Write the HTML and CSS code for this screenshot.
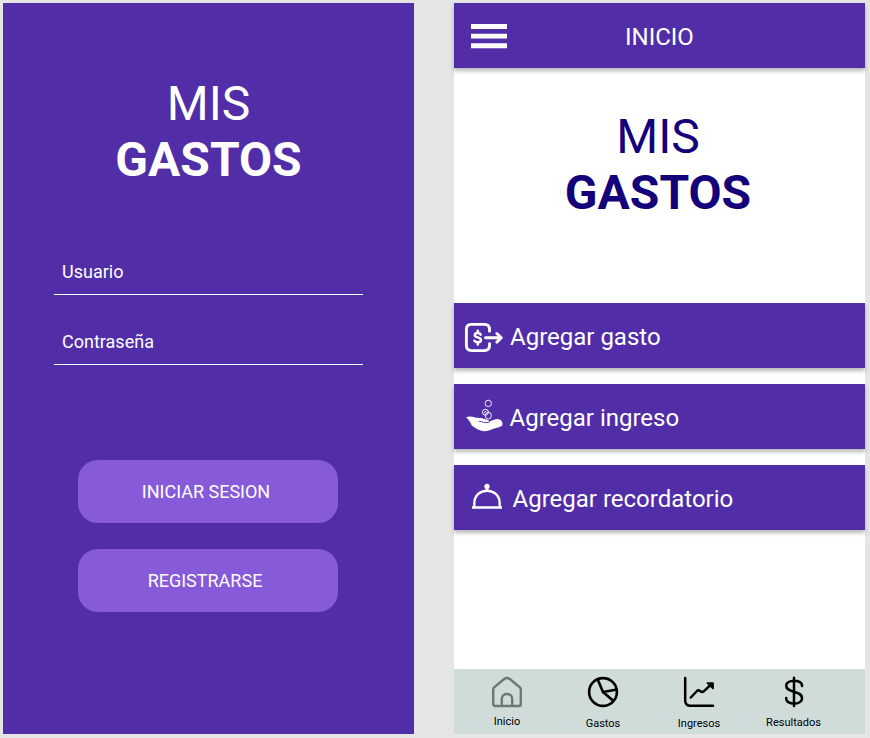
FILE: index.html
```html
<!DOCTYPE html>
<html lang="es">
<head>
<meta charset="utf-8">
<title>Mis Gastos</title>
<link rel="stylesheet" href="styles.css">
</head>
<body>
<main class="board">
  <section class="screen login">
    <h1 class="brand">MIS<br><b>GASTOS</b></h1>
    <form class="form">
      <div class="field">Usuario</div>
      <div class="field">Contraseña</div>
    </form>
    <div class="actions">
      <button class="btn" type="button">INICIAR SESION</button>
      <button class="btn btn-alt" type="button">REGISTRARSE</button>
    </div>
  </section>

  <section class="screen home">
    <header class="bar">
      <svg class="menu" width="36" height="25" viewBox="0 0 36 25" fill="#fff"><path d="M0 0h36v5H0zM0 9.7h36v4.7H0zM0 19.3h36v5H0z"/></svg>
      <span class="bar-title">INICIO</span>
    </header>
    <h1 class="brand brand-dark">MIS<br><b>GASTOS</b></h1>
    <div class="options">
      <div class="option expense">
        <svg width="40" height="32" viewBox="0 0 40 32" fill="none" stroke="#fff" stroke-width="2.9" stroke-linecap="round" stroke-linejoin="round">
          <path d="M25.5 9.2V7.4Q25.5 2.4 20.5 2.4H7.4Q2.4 2.4 2.4 7.4V23.6Q2.4 28.6 7.4 28.6H20.5Q25.5 28.6 25.5 23.6V21.6"/>
          <path d="M21.5 15.8H37M32.8 11.5L37.3 15.8L32.8 20.1"/>
          <path stroke-width="2.5" d="M16.7 12.6C15.6 10.4 10.8 10.4 10.8 13.2C10.8 16.2 17 14.6 17 18C17 21 11.6 21 10.4 18.7M13.8 8.7V10.7M13.8 20.6V22.6"/>
        </svg>
        <span>Agregar gasto</span>
      </div>
      <div class="option income">
        <svg width="38" height="34" viewBox="0 0 38 34" fill="none" stroke="#fff" stroke-width=".9">
          <circle cx="22.3" cy="5.4" r="3.2"/>
          <circle cx="19.4" cy="14.2" r="3"/>
          <ellipse cx="22.3" cy="17.6" rx="3" ry="3.5"/>
          <path d="M17.9 15.3l2.3-2.8"/>
          <path fill="#fff" stroke="none" d="M.2 19.4C2.8 17.9 5.8 18.8 9 19.6C12 20.3 15.5 20 18.7 21C21 21.6 22.8 22.5 23.2 23.7C26.2 22.8 29.7 20.7 32.5 21.2C35.8 21.5 37 24.5 36.3 27.3C34.9 29.5 30 29.7 26.8 31C23.5 32.5 19.5 34.1 15.4 32.8C11.5 31.5 7.5 29.5 5.6 27.3C4.8 24.9 3.4 22.3.2 19.4z"/>
          <path stroke="#512da8" d="M12.8 23.3C16 23.1 18.5 25.7 23.2 24.3"/>
        </svg>
        <span>Agregar ingreso</span>
      </div>
      <div class="option reminder">
        <svg width="32" height="28" viewBox="0 0 32 28" fill="none" stroke="#fff" stroke-width="2.4">
          <path d="M1 24.5H31M3.3 24V20.5C3.3 3.4 28.7 3.4 28.7 20.5V24"/>
          <path d="M16 4V8"/>
          <circle cx="16" cy="3.4" r="2.6" fill="#fff" stroke="none"/>
        </svg>
        <span>Agregar recordatorio</span>
      </div>
    </div>
    <nav class="tabs">
      <div class="tab tab-high">
        <svg width="32" height="32" viewBox="0 0 32 32" fill="none" stroke="#6d7776" stroke-width="2.4" stroke-linejoin="round"><path d="M2.2 13.8Q2.2 12.2 3.4 11.1L13.2 3Q16 .9 18.8 3L28.6 11.1Q29.8 12.2 29.8 13.8V28Q29.8 30 27.8 30H4.2Q2.2 30 2.2 28zM10.8 30V22.8C10.8 16.3 21.2 16.3 21.2 22.8V30"/></svg>
        <span>Inicio</span>
      </div>
      <div class="tab">
        <svg width="32" height="32" viewBox="0 0 32 32" fill="none" stroke="#000" stroke-width="2.6"><circle cx="16" cy="16" r="13.9"/><path d="M10.5 3L16 16L30 13.5M16 16L26.5 25"/></svg>
        <span>Gastos</span>
      </div>
      <div class="tab">
        <svg width="32" height="32" viewBox="0 0 32 32" fill="none" stroke="#000" stroke-width="2.5" stroke-linecap="round" stroke-linejoin="round"><path d="M2.2 2V24.5Q2.2 29.8 7.5 29.8H30M7.8 21.5L14 15Q15.3 13.7 16.8 14.7L18.2 15.8Q19.6 16.5 21 15.2L28 8.5"/><path d="M24.3 7H30V12.4z" fill="#000" stroke-width="1.7"/></svg>
        <span>Ingresos</span>
      </div>
      <div class="tab tab-mid">
        <svg width="32" height="32" viewBox="0 0 32 32" fill="none" stroke="#000" stroke-width="2.5" stroke-linecap="round"><path d="M16 1.8V30.1M24 10V9.5C24 3 8.2 3 8.2 9.8C8.2 17.3 24 14.2 24 22.2C24 29.4 8.2 29.4 8.2 22.4V22"/></svg>
        <span>Resultados</span>
      </div>
    </nav>
  </section>
</main>
</body>
</html>
```
FILE: styles.css
```css
* { box-sizing: border-box; }

body {
  margin: 0;
  background: #e5e5e5;
  font-family: Roboto, "Liberation Sans", sans-serif;
}

.board {
  display: flex;
  gap: 40px;
  padding: 3px;
}

.screen {
  display: flex;
  flex-direction: column;
  flex: none;
  width: 411px;
  height: 731px;
}

.login {
  background: #512da8;
  color: #fff;
  padding-top: 73px;
}

.brand {
  margin: 0;
  font-size: 48px;
  line-height: 56px;
  font-weight: 400;
  text-align: center;
}

.brand b { font-weight: 700; }

.brand-dark {
  margin-top: 41px;
  padding-right: 3px;
  color: #14007a;
}

.form {
  width: 309px;
  margin: 60px 0 0 51px;
}

.field {
  display: flex;
  flex-direction: column;
  justify-content: space-between;
  height: 70px;
  padding: 13px 8px 23px;
  font-size: 18px;
  line-height: 21px;
}

.field::after {
  content: "";
  height: 1px;
  margin: 0 -8px;
  background: #fff;
}

.actions {
  display: flex;
  flex-direction: column;
  gap: 26px;
  margin: 72px 0 0 75px;
}

.btn {
  width: 260px;
  height: 63px;
  padding: 0 4px 0 0;
  border: 0;
  border-radius: 20px;
  background: #865ad9;
  color: #fff;
  font: 18px/21px Roboto, sans-serif;
}

.btn-alt { padding-right: 6px; }

.home { background: #fff; }

.bar, .option {
  display: flex;
  align-items: center;
  height: 65px;
  background: #512da8;
  color: #fff;
  font-size: 24px;
  line-height: 28px;
  box-shadow: 0 3px 4px rgba(0, 0, 0, .28);
}

.bar { padding-left: 17px; }
.menu { margin-top: 2px; }
.bar-title { margin: 3px 0 0 118px; }

.options {
  display: flex;
  flex-direction: column;
  gap: 16px;
  margin-top: 82px;
}

.option span { padding-top: 3px; }
.expense { padding-left: 10px; gap: 6px; }
.expense svg { margin-top: 5px; }
.income { padding-left: 11.5px; gap: 6px; }
.income svg { margin-top: -3px; }
.reminder { padding-left: 17px; gap: 9.5px; }
.reminder svg { margin-top: -2px; }

.tabs {
  display: flex;
  height: 65px;
  margin-top: auto;
  padding-left: 5px;
  background: #d0dcda;
}

.tab {
  display: flex;
  flex-direction: column;
  align-items: center;
  gap: 9px;
  width: 96px;
  padding-top: 7px;
  font-size: 11px;
  line-height: 13px;
  color: #000;
}

.tab-high { gap: 7px; }
.tab-mid { gap: 8px; width: 93px; }
```
